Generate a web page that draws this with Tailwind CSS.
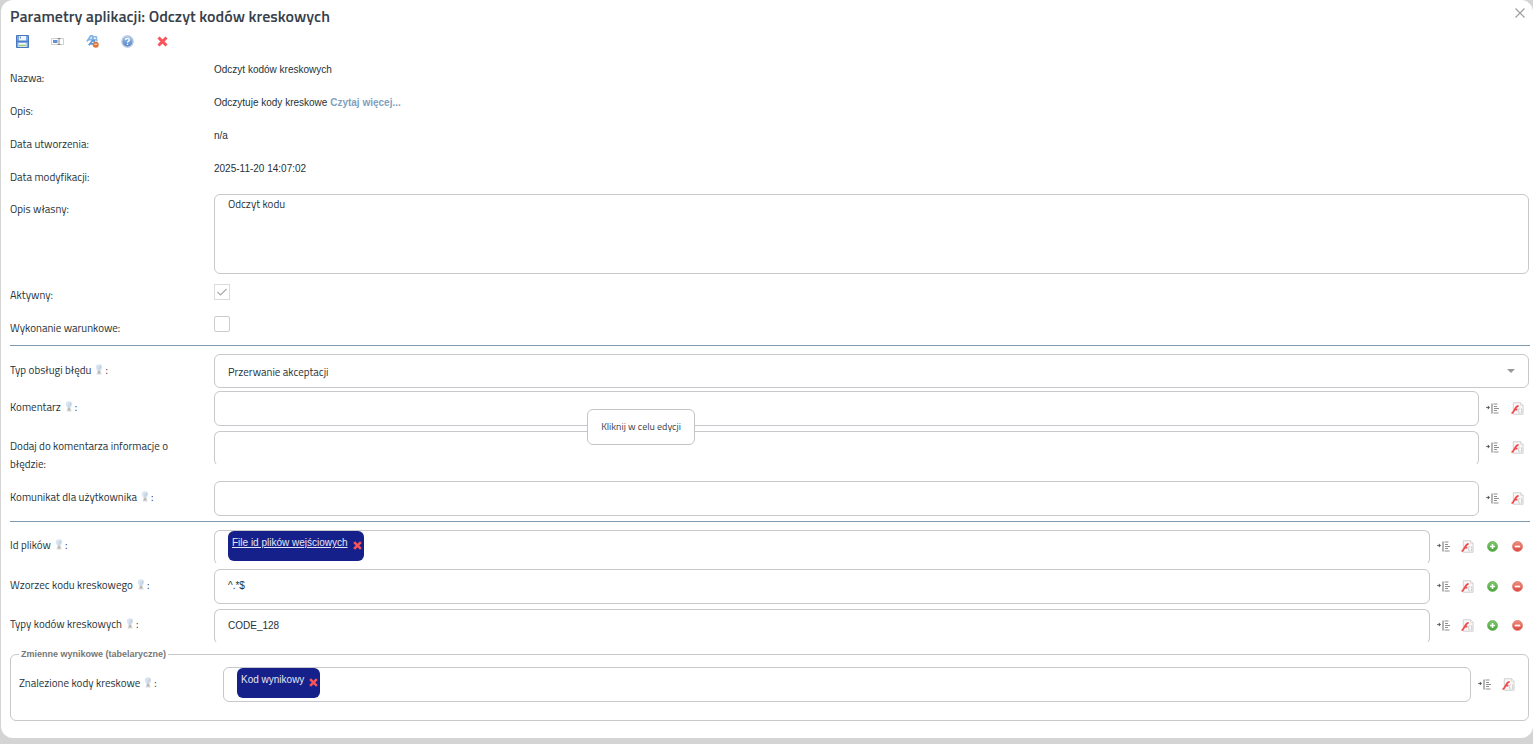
<!DOCTYPE html>
<html lang="pl">
<head>
<meta charset="utf-8">
<title>Parametry aplikacji: Odczyt kodów kreskowych</title>
<script src="https://cdn.jsdelivr.net/npm/@tailwindcss/browser@4"></script>
</head>
<body class="min-h-screen bg-[#d4d4d4] pl-px font-['Titillium_Web',Roboto,sans-serif] text-[11px] leading-[18px] text-[#263238]">

<svg class="absolute size-0" aria-hidden="true">
  <defs>
    <linearGradient id="blue" x1="0" y1="0" x2="0" y2="1"><stop offset="0" stop-color="#a9c8ee"/><stop offset="1" stop-color="#4a7fc4"/></linearGradient>
    <linearGradient id="green" x1="0" y1="0" x2="0" y2="1"><stop offset="0" stop-color="#7fc96b"/><stop offset="1" stop-color="#45a23a"/></linearGradient>
    <linearGradient id="red" x1="0" y1="0" x2="0" y2="1"><stop offset="0" stop-color="#f0907f"/><stop offset="1" stop-color="#d9473b"/></linearGradient>
    <symbol id="bulb" viewBox="0 0 8 11">
      <path d="M4 .3C1.700.3.700 1.700.700 3.200c0 1.600 1.300 2.300 1.600 3.900h3.400c.3-1.600 1.600-2.300 1.600-3.900C7.300 1.700 6.300.3 4 .3z" fill="#dbe5ef"/>
      <path d="M4 2.500v4.500M5.500 1.500v3" stroke="#b4c6d8" stroke-width=".8"/>
      <path d="M2.600 7.200h2.900v1.800H2.600z" fill="#b5b1a9"/><path d="M1.800 9.300h4.600v1H1.800z" fill="#bcbec1"/>
    </symbol>
    <symbol id="insert" viewBox="0 0 13 11">
      <path d="M0 4.500h2" stroke="#777"/><path d="M1.800 2.500l2.200 2-2.200 2z" fill="#555"/>
      <path d="M5 .5h2v10H5z" fill="#b5b5b5"/>
      <path d="M7.500 1h4M8 3.500h3M8 5.500h5M8 7.500h3M7.500 10h5" stroke="#8e8e8e"/>
    </symbol>
    <symbol id="func" viewBox="0 0 14 14">
      <path d="M2.500 .8h8L13 3.300v9.900H2.500z" fill="#f8f8f8" stroke="#cdcdcd"/>
      <path d="M10.300 .8v2.700h2.700" fill="#fff" stroke="#cdcdcd" stroke-width=".8"/>
      <path d="M.6 12.300C3.800 11.400 4.200 4.200 8.200 4.200M3.500 8.200h3.400" fill="none" stroke="#f2494d" stroke-width="2"/>
      <path d="M9.200 7c-1.400 0-.3 2.100-1.500 2.500 1.200.4.1 2.500 1.500 2.500M10.600 7c1.400 0 .3 2.100 1.500 2.500-1.200.4-.1 2.500-1.500 2.500" fill="none" stroke="#b5b5b5" stroke-width=".8"/>
    </symbol>
    <symbol id="plus" viewBox="0 0 12 12"><circle cx="6" cy="6" r="5.500" fill="url(#green)" stroke="#6cb55f" stroke-width=".8"/><path d="M6 3.200v5.600M3.200 6h5.600" stroke="#fff" stroke-width="1.700"/></symbol>
    <symbol id="minus" viewBox="0 0 12 12"><circle cx="6" cy="6" r="5.500" fill="url(#red)" stroke="#df7a70" stroke-width=".8"/><path d="M3 6h6" stroke="#fff" stroke-width="1.900"/></symbol>
    <symbol id="cross" viewBox="0 0 12 12"><path d="M2.300 2.300l7.400 7.400M9.700 2.300L2.300 9.700" stroke="#f8545a" stroke-width="2.800"/></symbol>
  </defs>
</svg>

<main class="rounded-xl bg-white pt-[3px] pr-[3px] pb-[17px] pl-[9px]">
  <header class="flex h-[25px] items-center justify-between">
    <h1 class="text-[16px] font-semibold text-[#37414b]">Parametry aplikacji: Odczyt kodów kreskowych</h1>
    <button aria-label="Zamknij" class="flex h-5 w-5 items-center justify-center self-start">
      <svg class="size-[10px]" viewBox="0 0 10 10"><path d="M.5.5l9 9M9.500.5l-9 9" stroke="#a0a0a0" stroke-width="1.200"/></svg>
    </button>
  </header>

  <div class="flex h-[34px] gap-[10px] pt-px">
    <button aria-label="Zapisz" class="flex size-[25px] items-center justify-center">
      <svg class="size-[13px]" viewBox="0 0 13 13"><path d="M.5.5h12v12H.5z" fill="#79a7e3" stroke="#4a76be"/><path d="M3 1h7v4.500H3z" fill="#eef5fd"/><path d="M4.300 1.500v2" stroke="#5580bd"/><path d="M1 6.300h11" stroke="#4574be"/><path d="M2.500 8h8v4h-8z" fill="#f5faf2"/><path d="M3 10.500h7" stroke="#9bcb7d" stroke-width="1.600"/></svg>
    </button>
    <button aria-label="Zmień nazwę" class="flex size-[25px] items-center justify-center">
      <svg class="h-[7px] w-[13px]" viewBox="0 0 13 7"><path d="M.5.5h12v6H.5z" fill="#fff" stroke="#d0d0d0"/><path d="M2 2h4.500v3H2z" fill="#6390d3"/><path d="M6.500.5h3M8 .5v6M6.500 6.500h3" stroke="#8a8a8a"/></svg>
    </button>
    <button aria-label="Tłumaczenia" class="flex size-[25px] items-center justify-center">
      <svg class="size-[13px]" viewBox="0 0 14 14"><path d="M1 7L5 1h2v6M2.500 5H7" fill="none" stroke="#86b5e5" stroke-width="1.800"/><path d="M7 2h5M8 2v4M11 2l1 5M8 5h4" stroke="#8fbae6" stroke-width="1.600"/><path d="M3 11l4-5h2v6M4 9.500h5" fill="none" stroke="#5b96d8" stroke-width="1.800"/><circle cx="10.500" cy="10.500" r="3.200" fill="#e2733a"/><path d="M9 10h3" stroke="#ffd1a3" stroke-width="1.300"/></svg>
    </button>
    <button aria-label="Pomoc" class="flex size-[25px] items-center justify-center">
      <svg class="size-[13px]" viewBox="0 0 12 12"><circle cx="6" cy="6" r="5.300" fill="url(#blue)" stroke="#c3d0e2" stroke-width="1.200"/><path d="M4.300 4.700C4.300 2.600 7.700 2.700 7.700 4.600 7.700 5.800 6 5.700 6 7.100M6 8v1.300" fill="none" stroke="#fff" stroke-width="1.300"/></svg>
    </button>
    <button aria-label="Usuń" class="flex size-[25px] items-center justify-center"><svg class="size-[13px]"><use href="#cross"/></svg></button>
  </div>

  <dl class="grid auto-rows-[33px] grid-cols-[204px_1fr]">
    <dt class="pt-[7px]">Nazwa:</dt><dd class="font-['Liberation_Sans',sans-serif] text-[10px] leading-4">Odczyt kodów kreskowych</dd>
    <dt class="pt-[7px]">Opis:</dt><dd class="font-['Liberation_Sans',sans-serif] text-[10px] leading-4">Odczytuje kody kreskowe <a href="#" class="font-bold text-[#829fbe]">Czytaj więcej...</a></dd>
    <dt class="pt-[7px]">Data utworzenia:</dt><dd class="font-['Liberation_Sans',sans-serif] text-[10px] leading-4">n/a</dd>
    <dt class="pt-[7px]">Data modyfikacji:</dt><dd class="font-['Liberation_Sans',sans-serif] text-[10px] leading-4">2025-11-20 14:07:02</dd>
  </dl>

  <div class="grid grid-cols-[204px_1fr] pr-px">
    <label for="own" class="pt-1.5">Opis własny:</label>
    <textarea id="own" class="block h-20 w-full resize-none rounded-md border border-[#c8c8cc] px-[13px] py-0">Odczyt kodu</textarea>
  </div>
  <div class="grid h-[38px] grid-cols-[204px_1fr] pt-[5px]">
    <label for="active" class="pt-[7px]">Aktywny:</label>
    <span class="relative mt-[5px] size-4">
      <input id="active" type="checkbox" checked disabled class="block size-4 appearance-none border border-[#dcdcdc] bg-white">
      <svg class="pointer-events-none absolute top-0 left-0 size-4" viewBox="0 0 16 16"><path d="M3.500 8l3 3L12.500 5" fill="none" stroke="#aaa" stroke-width="1.200"/></svg>
    </span>
  </div>
  <div class="grid h-[33px] grid-cols-[204px_1fr]">
    <label for="cond" class="pt-[7px]">Wykonanie warunkowe:</label>
    <input id="cond" type="checkbox" class="mt-1 block size-4 appearance-none rounded-[2px] border border-[#ccc] bg-white">
  </div>
  <hr class="border-[#829bb4]">

  <section class="relative grid gap-y-[5px] pt-2 pb-[5px]">
    <div class="-mb-0.5 grid grid-cols-[204px_1fr] pr-px">
      <label for="err" class="flex items-start gap-1 pt-[7px]"><span>Typ obsługi błędu</span><span class="flex items-start gap-0.5"><svg class="mt-[3px] h-[11px] w-2"><use href="#bulb"/></svg>:</span></label>
      <span class="relative">
        <select id="err" class="block h-[34px] w-full appearance-none rounded-md border border-[#c8c8cc] bg-white px-[13px] pt-px"><option>Przerwanie akceptacji</option></select>
        <svg class="pointer-events-none absolute top-[15px] right-[14px] h-1 w-2" viewBox="0 0 8 4"><path d="M0 0h8L4 4z" fill="#999"/></svg>
      </span>
    </div>
    <div class="grid grid-cols-[204px_1fr_51px]">
      <label for="comment" class="flex items-start gap-1 pt-[7px]"><span>Komentarz</span><span class="flex items-start gap-0.5"><svg class="mt-[3px] h-[11px] w-2"><use href="#bulb"/></svg>:</span></label>
      <input id="comment" class="h-[35px] w-full rounded-md border border-[#c8c8cc] px-[13px]">
      <span class="flex h-[34px] justify-end"><button aria-label="Wstaw zmienną" class="flex w-[25px] items-center justify-end pr-1.5"><svg class="h-[11px] w-[13px]"><use href="#insert"/></svg></button><button aria-label="Funkcja" class="flex w-[25px] items-center justify-center"><svg class="size-[13px]"><use href="#func"/></svg></button></span>
    </div>
    <div class="grid h-[45px] grid-cols-[204px_1fr_51px]">
      <label for="info" class="pt-1.5 pr-7">Dodaj do komentarza informacje o błędzie:</label>
      <input id="info" class="h-[35px] w-full rounded-md border border-[#c8c8cc] border-b-transparent px-[13px]">
      <span class="flex h-[33px] justify-end"><button aria-label="Wstaw zmienną" class="flex w-[25px] items-center justify-end pr-1.5"><svg class="h-[11px] w-[13px]"><use href="#insert"/></svg></button><button aria-label="Funkcja" class="flex w-[25px] items-center justify-center"><svg class="size-[13px]"><use href="#func"/></svg></button></span>
    </div>
    <div class="grid grid-cols-[204px_1fr_51px]">
      <label for="msg" class="flex items-start gap-1 pt-[7px]"><span>Komunikat dla użytkownika</span><span class="flex items-start gap-0.5"><svg class="mt-[3px] h-[11px] w-2"><use href="#bulb"/></svg>:</span></label>
      <input id="msg" class="h-[35px] w-full rounded-md border border-[#c8c8cc] px-[13px]">
      <span class="flex h-[34px] justify-end"><button aria-label="Wstaw zmienną" class="flex w-[25px] items-center justify-end pr-1.5"><svg class="h-[11px] w-[13px]"><use href="#insert"/></svg></button><button aria-label="Funkcja" class="flex w-[25px] items-center justify-center"><svg class="size-[13px]"><use href="#func"/></svg></button></span>
    </div>
    <div role="tooltip" class="absolute top-[63px] left-[577px] flex h-9 w-[108px] items-center justify-center rounded-md border border-[#c4c4c4] bg-white text-[10px] text-[#37414b]">Kliknij w celu edycji</div>
  </section>
  <hr class="border-[#829bb4]">

  <section class="grid gap-y-[5px] pt-2 pb-1.5">
    <div class="grid h-[34px] grid-cols-[204px_1fr_100px]">
      <span class="flex items-start gap-1 pt-1.5"><span>Id plików</span><span class="flex items-start gap-0.5"><svg class="mt-[3px] h-[11px] w-2"><use href="#bulb"/></svg>:</span></span>
      <div class="h-[35px] rounded-md border border-[#c8c8cc] border-b-transparent px-[13px]">
        <span class="flex h-[30px] w-fit gap-1 rounded-md bg-[#15208a] pr-px pl-1 font-['Liberation_Sans',sans-serif] text-[10px] leading-6 text-[#e4e6f4]"><a href="#" class="underline">File id plików wejściowych</a><button aria-label="Usuń" class="mt-[9px] size-[11px]"><svg class="size-[11px]"><use href="#cross"/></svg></button></span>
      </div>
      <span class="flex h-[33px]"><button aria-label="Wstaw zmienną" class="flex w-[25px] items-center justify-end pr-[5px]"><svg class="h-[11px] w-[13px]"><use href="#insert"/></svg></button><button aria-label="Funkcja" class="flex w-[25px] items-center justify-center"><svg class="size-[13px]"><use href="#func"/></svg></button><button aria-label="Dodaj" class="flex w-[25px] items-center justify-center"><svg class="size-[11px]" viewBox="0 0 12 12"><use href="#plus"/></svg></button><button aria-label="Usuń wiersz" class="flex w-[25px] items-center justify-center"><svg class="size-[11px]" viewBox="0 0 12 12"><use href="#minus"/></svg></button></span>
    </div>
    <div class="grid grid-cols-[204px_1fr_100px]">
      <label for="pattern" class="flex items-start gap-1 pt-[7px]"><span>Wzorzec kodu kreskowego</span><span class="flex items-start gap-0.5"><svg class="mt-[3px] h-[11px] w-2"><use href="#bulb"/></svg>:</span></label>
      <input id="pattern" value="^.*$" class="h-[35px] w-full rounded-md border border-[#c8c8cc] px-[13px] pb-0.5 font-['Liberation_Sans',sans-serif] text-[10px]">
      <span class="flex h-[34px]"><button aria-label="Wstaw zmienną" class="flex w-[25px] items-center justify-end pr-[5px]"><svg class="h-[11px] w-[13px]"><use href="#insert"/></svg></button><button aria-label="Funkcja" class="flex w-[25px] items-center justify-center"><svg class="size-[13px]"><use href="#func"/></svg></button><button aria-label="Dodaj" class="flex w-[25px] items-center justify-center"><svg class="size-[11px]" viewBox="0 0 12 12"><use href="#plus"/></svg></button><button aria-label="Usuń wiersz" class="flex w-[25px] items-center justify-center"><svg class="size-[11px]" viewBox="0 0 12 12"><use href="#minus"/></svg></button></span>
    </div>
    <div class="grid h-[34px] grid-cols-[204px_1fr_100px]">
      <label for="types" class="flex items-start gap-1 pt-1.5"><span>Typy kodów kreskowych</span><span class="flex items-start gap-0.5"><svg class="mt-[3px] h-[11px] w-2"><use href="#bulb"/></svg>:</span></label>
      <input id="types" value="CODE_128" class="h-[35px] w-full rounded-md border border-[#c8c8cc] border-b-transparent px-[13px] pb-0.5 font-['Liberation_Sans',sans-serif] text-[10px]">
      <span class="flex h-[33px]"><button aria-label="Wstaw zmienną" class="flex w-[25px] items-center justify-end pr-[5px]"><svg class="h-[11px] w-[13px]"><use href="#insert"/></svg></button><button aria-label="Funkcja" class="flex w-[25px] items-center justify-center"><svg class="size-[13px]"><use href="#func"/></svg></button><button aria-label="Dodaj" class="flex w-[25px] items-center justify-center"><svg class="size-[11px]" viewBox="0 0 12 12"><use href="#plus"/></svg></button><button aria-label="Usuń wiersz" class="flex w-[25px] items-center justify-center"><svg class="size-[11px]" viewBox="0 0 12 12"><use href="#minus"/></svg></button></span>
    </div>
  </section>

  <fieldset class="mr-px rounded-md border border-[#c8c8cc] pr-[7px] pb-[18px] pl-2">
    <legend class="px-0.5 font-['Liberation_Sans',sans-serif] text-[9px] leading-[10px] font-bold text-[#777]">Zmienne wynikowe (tabelaryczne)</legend>
    <div class="grid grid-cols-[204px_1fr_50px] pt-2">
      <span class="flex items-start gap-1 pt-[7px]"><span>Znalezione kody kreskowe</span><span class="flex items-start gap-0.5"><svg class="mt-[3px] h-[11px] w-2"><use href="#bulb"/></svg>:</span></span>
      <div class="h-[35px] rounded-md border border-[#c8c8cc] px-[13px]">
        <span class="flex h-[30px] w-fit gap-1 rounded-md bg-[#15208a] pr-px pl-1 font-['Liberation_Sans',sans-serif] text-[10px] leading-6 text-[#e4e6f4]">Kod wynikowy<button aria-label="Usuń" class="mt-[9px] size-[11px]"><svg class="size-[11px]"><use href="#cross"/></svg></button></span>
      </div>
      <span class="flex h-[34px]"><button aria-label="Wstaw zmienną" class="flex w-[25px] items-center justify-end pr-[5px]"><svg class="h-[11px] w-[13px]"><use href="#insert"/></svg></button><button aria-label="Funkcja" class="flex w-[25px] items-center justify-center"><svg class="size-[13px]"><use href="#func"/></svg></button></span>
    </div>
  </fieldset>
</main>
</body>
</html>
